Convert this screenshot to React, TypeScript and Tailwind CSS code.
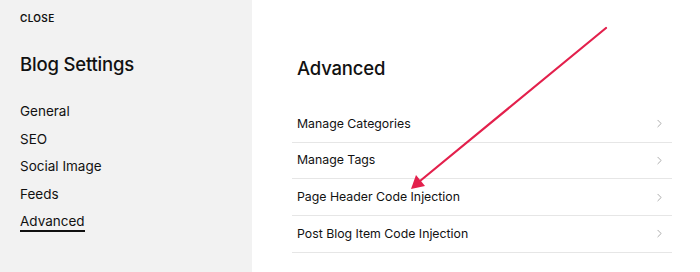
import { ChevronRight } from "lucide-react";

const navItems = ["General", "SEO", "Social Image", "Feeds", "Advanced"];

const rows = [
  "Manage Categories",
  "Manage Tags",
  "Page Header Code Injection",
  "Post Blog Item Code Injection",
];

export default function App() {
  return (
    <div
      className="relative flex h-[272px] w-[700px] overflow-hidden bg-white text-[#111]"
      style={{ fontFamily: "Inter, 'Liberation Sans', sans-serif" }}
    >
      {/* Sidebar */}
      <aside className="w-[252px] shrink-0 bg-[#f2f2f2] pl-5">
        <div className="pt-[12px] text-[10px] font-semibold leading-[12px] tracking-[0.03em]">
          CLOSE
        </div>
        <h1 className="mt-[29px] text-[18.5px] font-medium leading-[22px] tracking-[-0.01em]">
          Blog Settings
        </h1>
        <nav className="mt-[22px] flex flex-col items-start">
          {navItems.map((item) => (
            <div key={item} className="flex h-[27.75px] items-center">
              <span
                className={
                  item === "Advanced"
                    ? "border-b-2 border-[#111] text-[13.5px] leading-[18px]"
                    : "text-[13.5px] leading-[18px]"
                }
              >
                {item}
              </span>
            </div>
          ))}
        </nav>
      </aside>

      {/* Main panel */}
      <main className="flex-1 pl-[40px] pr-[28px]">
        <h2 className="mt-[57px] pl-[5px] text-[18.5px] font-medium leading-[22px] tracking-[-0.01em]">
          Advanced
        </h2>
        <ul className="mt-[27px]">
          {rows.map((row) => (
            <li
              key={row}
              className="flex h-[36.67px] items-center justify-between border-b border-[#e6e6e6] pl-[5px] pr-[6px] text-[12.3px]"
            >
              <span>{row}</span>
              <ChevronRight className="h-[13px] w-[13px] text-[#9a9a9a]" strokeWidth={1.5} />
            </li>
          ))}
        </ul>
      </main>

      {/* Annotation arrow */}
      <svg
        className="pointer-events-none absolute left-0 top-0"
        width="700"
        height="272"
        viewBox="0 0 700 272"
      >
        <line x1="606" y1="28" x2="420" y2="181" stroke="#e3204c" strokeWidth="2.2" strokeLinecap="round" />
        <polygon points="411,189 416,175 425,186" fill="#e3204c" />
      </svg>
    </div>
  );
}
